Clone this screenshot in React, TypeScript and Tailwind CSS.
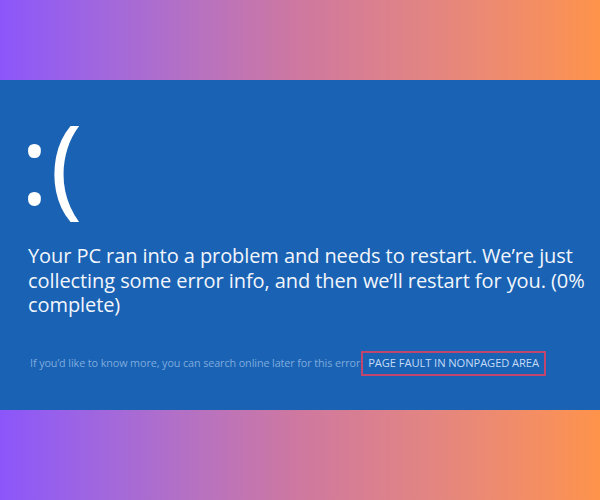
export default function App() {
  return (
    <div className="w-[600px] h-[500px] flex flex-col bg-gradient-to-r from-[#8c55fb] via-[#cf789f] to-[#fe934a]">
      <div className="h-[80px]" />
      <div
        className="h-[330px] bg-[#1a62b3] text-white flex flex-col pl-[28px] pr-[10px]"
        style={{ fontFamily: '"Open Sans", "Noto Sans", sans-serif' }}
      >
        <div className="mt-[20px] ml-[-8px] text-[110px] leading-[124px] font-normal tracking-[1px] h-[128px]">:(</div>
        <p className="mt-[16px] text-[20px] leading-[24.5px] tracking-[-0.08px] text-[#f2f6fc]">
          Your PC ran into a problem and needs to restart. We’re just collecting some error info, and then we’ll restart for you. (0% complete)
        </p>
        <div className="mt-[33px] flex items-center text-[10.8px] tracking-[-0.1px] text-[#7fabde]">
          <span className="pl-[2px]">If you’d like to know more, you can search online later for this error</span>
          <span className="ml-[1px] border-2 border-[#c0466e] px-[5px] h-[25px] flex items-center text-[11.2px] text-[#c3dbf7]">
            PAGE FAULT IN NONPAGED AREA
          </span>
        </div>
      </div>
    </div>
  );
}
